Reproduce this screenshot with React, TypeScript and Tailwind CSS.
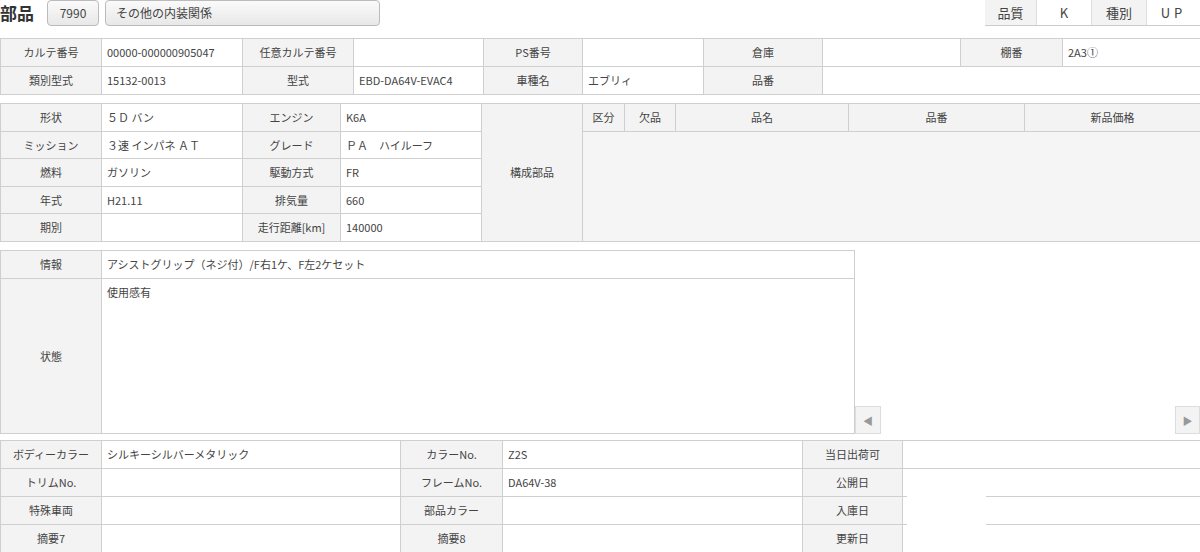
const L = "bg-[#f3f3f3] text-center border-r border-b border-[#cfcfcf]";
const V = "px-[5px] border-r border-b border-[#cfcfcf] bg-white";

export default function App() {
  return (
    <div className="w-[1200px] h-[552px] bg-white text-[11px] text-[#444] overflow-hidden" style={{ fontFamily: '"Noto Sans CJK JP", "Noto Sans", sans-serif' }}>
      <div className="flex h-[26px] items-stretch">
        <div className="w-[47px] text-[17px] font-bold text-[#333] leading-[26px]">部品</div>
        <div className="w-[52px] border border-[#bbb] rounded-[4px] bg-gradient-to-b from-[#fafafa] to-[#e8e8e8] text-[12px] flex items-center justify-center">7990</div>
        <div className="ml-[6px] w-[275px] border border-[#bbb] rounded-[4px] bg-gradient-to-b from-[#fafafa] to-[#e8e8e8] text-[12px] flex items-center px-[10px]">その他の内装関係</div>
        <div className="flex-1" />
        <div className="flex text-[13px] border-b border-[#ccc]">
          <div className="w-[52px] bg-[#f3f3f3] border-r border-[#ddd] flex items-center justify-center">品質</div>
          <div className="w-[55px] border-r border-[#ddd] flex items-center justify-center">K</div>
          <div className="w-[55px] bg-[#f3f3f3] border-r border-[#ddd] flex items-center justify-center">種別</div>
          <div className="w-[53px] flex items-center justify-center tracking-[4px]">UP</div>
        </div>
      </div>

      <div className="mt-[12px] border-t border-l border-[#cfcfcf] grid grid-cols-[101px_141px_111px_130px_99px_121px_119px_138px_102px_138px] auto-rows-[28px] leading-[27px]">
        <div className={L}>カルテ番号</div><div className={V}>00000-000000905047</div>
        <div className={L}>任意カルテ番号</div><div className={V}></div>
        <div className={L}>PS番号</div><div className={V}></div>
        <div className={L}>倉庫</div><div className={V}></div>
        <div className={L}>棚番</div><div className={V}>2A3①</div>
        <div className={L}>類別型式</div><div className={V}>15132-0013</div>
        <div className={L}>型式</div><div className={V}>EBD-DA64V-EVAC4</div>
        <div className={L}>車種名</div><div className={V}>エブリィ</div>
        <div className={L}>品番</div><div className={`${V} col-span-3`}></div>
      </div>

      <div className="mt-[8px] border-t border-l border-[#cfcfcf] grid grid-cols-[101px_141px_98px_141px_101px_618px] grid-rows-[28px_27px_28px_27px_28px] leading-[27px] h-[139px]">
        <div className={L}>形状</div><div className={V}>５Ｄ バン</div>
        <div className={L}>エンジン</div><div className={V}>K6A</div>
        <div className={`${L} row-span-5 flex items-center justify-center`}>構成部品</div>
        <div className="row-span-5 border-r border-b border-[#cfcfcf] bg-[#f5f5f5] flex flex-col">
          <div className="flex h-[28px] bg-[#f3f3f3] border-b border-[#cfcfcf] text-center">
            <div className="w-[42px] border-r border-[#cfcfcf]">区分</div>
            <div className="w-[51px] border-r border-[#cfcfcf]">欠品</div>
            <div className="w-[173px] border-r border-[#cfcfcf]">品名</div>
            <div className="w-[176px] border-r border-[#cfcfcf]">品番</div>
            <div className="flex-1">新品価格</div>
          </div>
        </div>
        <div className={L}>ミッション</div><div className={V}>３速 インパネ ＡＴ</div>
        <div className={L}>グレード</div><div className={V}>ＰＡ　ハイルーフ</div>
        <div className={L}>燃料</div><div className={V}>ガソリン</div>
        <div className={L}>駆動方式</div><div className={V}>FR</div>
        <div className={L}>年式</div><div className={V}>H21.11</div>
        <div className={L}>排気量</div><div className={V}>660</div>
        <div className={L}>期別</div><div className={V}></div>
        <div className={L}>走行距離[km]</div><div className={V}>140000</div>
      </div>

      <div className="mt-[8px] flex h-[184px]">
        <div className="w-[855px] border-t border-l border-[#cfcfcf] grid grid-cols-[101px_1fr] grid-rows-[28px_1fr] leading-[27px]">
          <div className={L}>情報</div><div className={V}>アシストグリップ（ネジ付）/F右1ケ、F左2ケセット</div>
          <div className={`${L} flex items-center justify-center`}>状態</div><div className={V}>使用感有</div>
        </div>
        <div className="flex-1 flex items-end justify-between">
          <div className="w-[26px] h-[28px] border border-[#ddd] bg-[#f3f3f3] flex items-center justify-center text-[#999] text-[10px]">◀</div>
          <div className="w-[25px] h-[28px] border border-[#ddd] bg-[#f3f3f3] flex items-center justify-center text-[#999] text-[10px]">▶</div>
        </div>
      </div>

      <div className="mt-[6px] border-t border-l border-[#cfcfcf] grid grid-cols-[101px_299px_102px_300px_100px_298px] auto-rows-[28px] leading-[27px]">
        <div className={L}>ボディーカラー</div><div className={V}>シルキーシルバーメタリック</div>
        <div className={L}>カラーNo.</div><div className={V}>Z2S</div>
        <div className={L}>当日出荷可</div><div className={V}></div>
        <div className={L}>トリムNo.</div><div className={V}></div>
        <div className={L}>フレームNo.</div><div className={V}>DA64V-38</div>
        <div className={L}>公開日</div><div className="bg-white relative border-r border-[#cfcfcf]"><div className="absolute bottom-0 left-0 w-[4px] border-b border-[#cfcfcf]" /><div className="absolute bottom-0 left-[83px] right-0 border-b border-[#cfcfcf]" /></div>
        <div className={L}>特殊車両</div><div className={V}></div>
        <div className={L}>部品カラー</div><div className={V}></div>
        <div className={L}>入庫日</div><div className="bg-white relative border-r border-[#cfcfcf]"><div className="absolute bottom-0 left-0 w-[4px] border-b border-[#cfcfcf]" /><div className="absolute bottom-0 left-[83px] right-0 border-b border-[#cfcfcf]" /></div>
        <div className={L}>摘要7</div><div className={V}></div>
        <div className={L}>摘要8</div><div className={V}></div>
        <div className={L}>更新日</div><div className={V}></div>
      </div>
    </div>
  );
}
